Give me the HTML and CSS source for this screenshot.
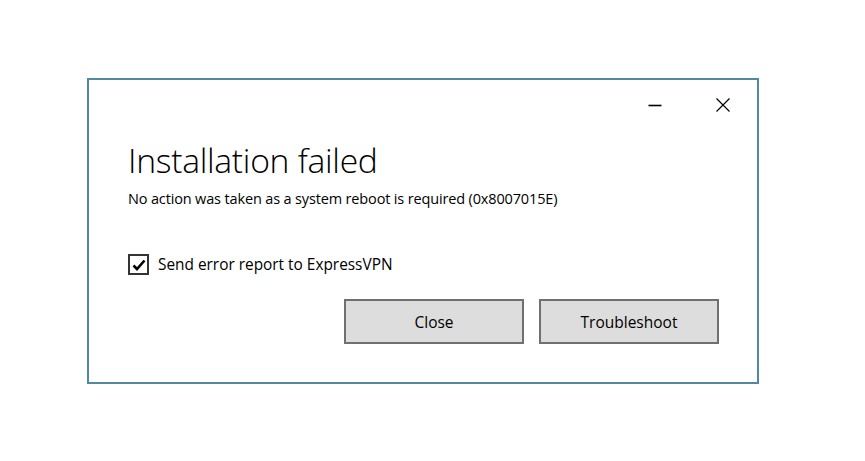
FILE: index.html
```html
<!DOCTYPE html>
<html>
<head>
<meta charset="utf-8">
<link rel="stylesheet" href="styles.css">
</head>
<body>
<div class="window">
  <div class="titlebar">
    <span class="ctrl min" aria-label="Minimize">
      <svg width="14" height="14" viewBox="0 0 14 14"><path d="M0.5 7.5H13.5" stroke="#000" stroke-width="1.6"/></svg>
    </span>
    <span class="ctrl close" aria-label="Close">
      <svg width="16" height="16" viewBox="0 0 16 16"><path d="M1.5 1.5L14.5 14.5M14.5 1.5L1.5 14.5" stroke="#000" stroke-width="1.2"/></svg>
    </span>
  </div>
  <div class="content">
    <h1 class="title">Installation failed</h1>
    <p class="message">No action was taken as a system reboot is required (0x8007015E)</p>
    <label class="check">
      <span class="box">
        <svg width="14" height="12" viewBox="0 0 14 12"><path d="M1.5 6.5L5 10L12.5 1.5" fill="none" stroke="#000" stroke-width="2.6"/></svg>
      </span>
      <span class="check-text">Send error report to ExpressVPN</span>
    </label>
    <div class="buttons">
      <button class="btn">Close</button>
      <button class="btn">Troubleshoot</button>
    </div>
  </div>
</div>
</body>
</html>
```
FILE: styles.css
```css
* { box-sizing: border-box; }
html, body { margin: 0; padding: 0; background: #fff; }
body {
  padding: 78px 0 0 87px;
  font-family: "Open Sans", "Noto Sans", sans-serif;
  color: #000;
}
.window {
  width: 672px;
  height: 306px;
  border: 2px solid #4f8aa0;
  background: #fff;
  display: flex;
  flex-direction: column;
}
.titlebar {
  display: flex;
  justify-content: flex-end;
  align-items: center;
  height: 50px;
  padding-right: 26px;
  gap: 53px;
}
.ctrl { display: flex; align-items: center; justify-content: center; }
.content {
  padding-left: 39px;
  padding-right: 38px;
  display: flex;
  flex-direction: column;
}
.title {
  margin: 7px 0 0 0;
  font-weight: 300;
  font-size: 33.7px;
  line-height: 46px;
  letter-spacing: -0.3px;
}
.message {
  margin: 6px 0 0 0;
  font-size: 14.5px;
  line-height: 20px;
  letter-spacing: -0.15px;
}
.check {
  display: flex;
  align-items: center;
  margin-top: 45px;
  gap: 9px;
}
.box {
  width: 21px;
  height: 21px;
  border: 2px solid #333;
  display: flex;
  align-items: center;
  justify-content: center;
}
.check-text {
  font-size: 15.4px;
  letter-spacing: 0;
}
.buttons {
  display: flex;
  justify-content: flex-end;
  gap: 15px;
  margin-top: 24px;
}
.btn {
  width: 180px;
  height: 45px;
  background: #dddddd;
  border: 2px solid #707070;
  font-family: "Open Sans", "Noto Sans", sans-serif;
  font-size: 15.5px;
  color: #000;
  padding: 0;
}
```
